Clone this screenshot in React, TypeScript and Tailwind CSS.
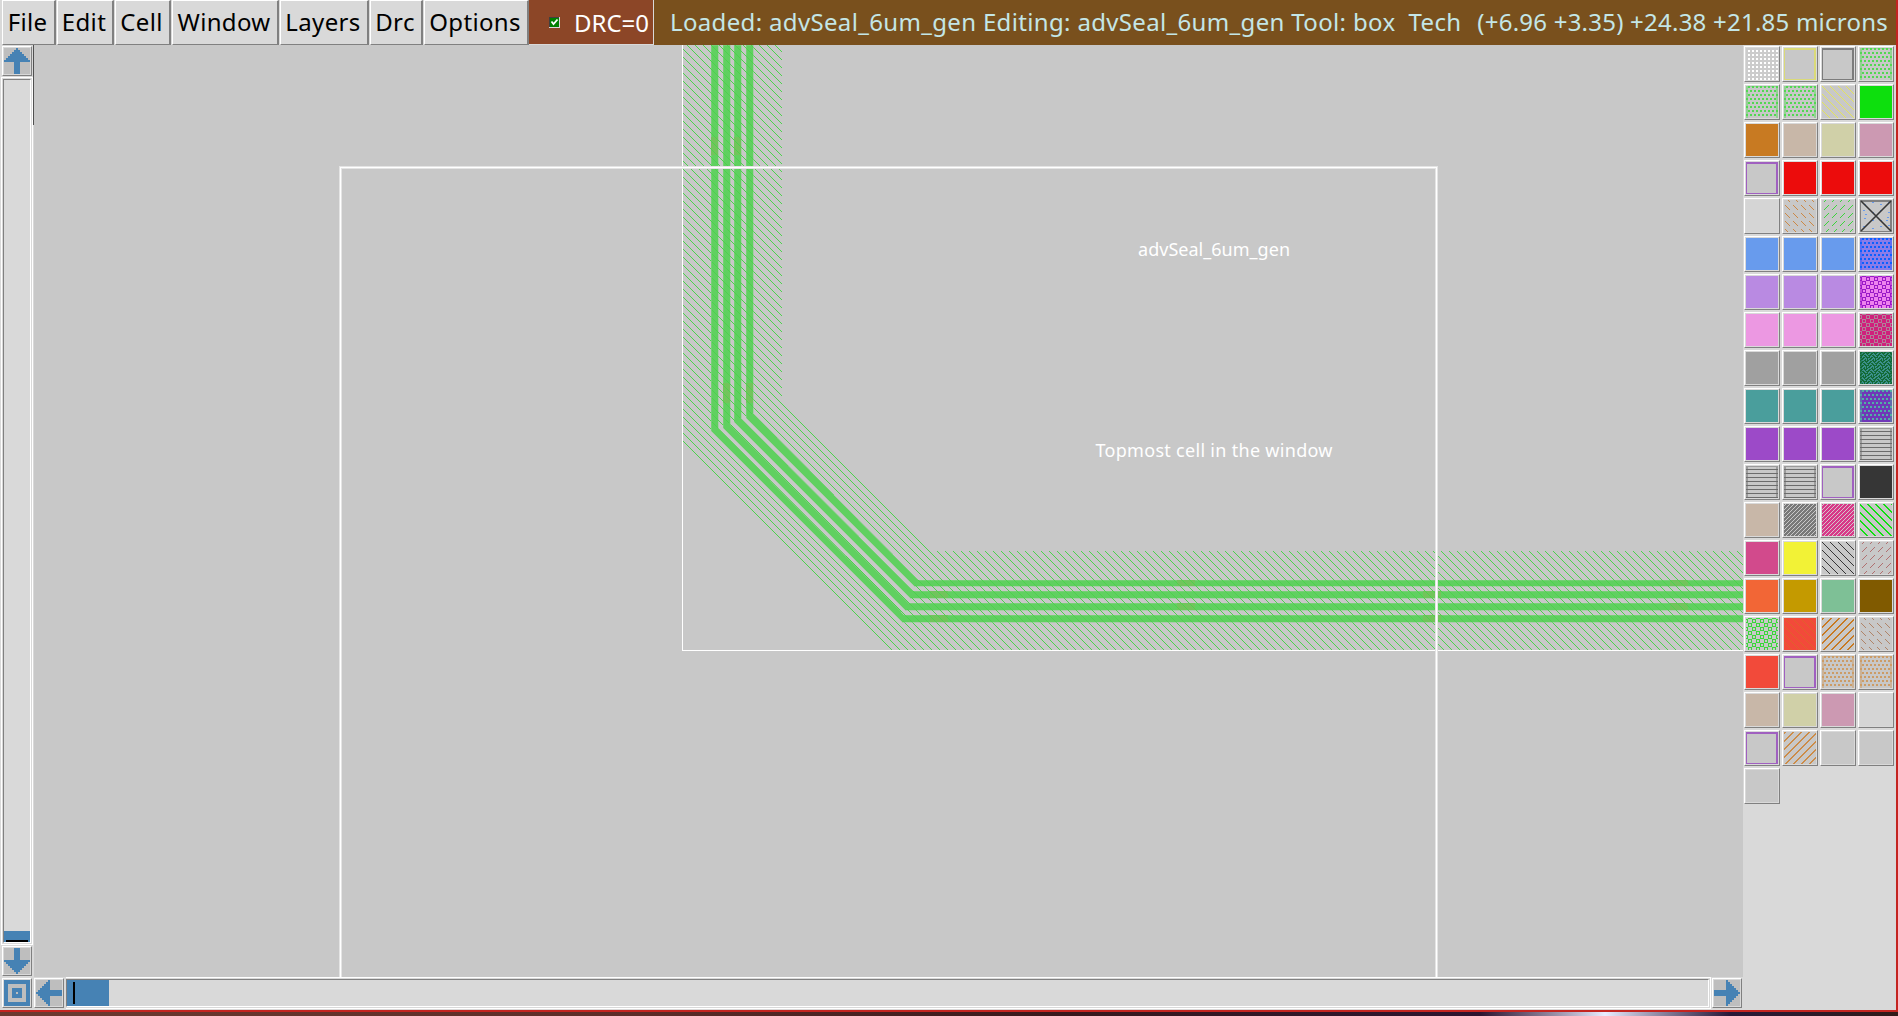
import React from "react";

type Dir = "down" | "up";

const pixels = (points: number[][]) =>
  points.map(([x, y, w = 1, h = 1]) => `M${x} ${y}h${w}v${h}h${-w}z`).join("");

function diagonal(period: number, dir: Dir, offset: number, width = 1) {
  const out: number[][] = [];
  for (let y = 0; y < 32; y++)
    for (let x = 0; x < 32; x++) {
      const k = dir === "down" ? y - x - offset : x + y - offset;
      if (((k % period) + period) % period < width) out.push([x, y]);
    }
  return pixels(out);
}

function dots(stagger: boolean) {
  const out: number[][] = [];
  for (let r = 0; r < 8; r++)
    for (let c = 0; c < 8; c++) {
      const x = stagger ? c * 4 + (r % 2 ? 0 : 2) : c * 4 + 2;
      out.push([x, stagger ? r * 4 : r * 4 + 2, 2, 2]);
    }
  return pixels(out);
}

function dashes(dir: Dir) {
  const out: number[][] = [];
  for (let y = -3; y < 32; y += 8)
    for (let x = 1; x < 32; x += 8)
      for (let i = 0; i < 5; i++) {
        const px = dir === "down" ? x + i : x + 5 - i;
        if (y + i >= 0 && y + i < 32 && px < 32) out.push([px, y + i]);
      }
  return pixels(out);
}

function rings() {
  const out: number[][] = [];
  const inRing = (x: number, y: number, ox: number, oy: number) => {
    const a = (x - ox + 32) % 8;
    const b = (y - oy + 32) % 8;
    return a < 4 && b < 4 && (a === 0 || a === 3 || b === 0 || b === 3);
  };
  for (let y = 0; y < 32; y++)
    for (let x = 0; x < 32; x++)
      if (inRing(x, y, 2, 5) || inRing(x, y, 6, 1)) out.push([x, y]);
  return pixels(out);
}

function lines() {
  return pixels([3, 7, 11, 15, 19, 23, 27, 31].map((y) => [0, y, 32, 1]));
}

function weave() {
  const rows = ["11000110", "10011011", "00110001", "11101100", "01000110", "11011011", "00110001", "01100101"];
  const out: number[][] = [];
  for (let y = 0; y < 32; y++)
    for (let x = 0; x < 32; x++) if (rows[y % 8][(x + (y >> 3)) % 8] === "1") out.push([x, y]);
  return pixels(out);
}

type Sw = { bg: string; d?: string; fg?: string; frame?: string; edge?: string; cross?: boolean };
const G = "#c8c8c8";
const solid = (bg: string): Sw => ({ bg });
const outline = (frame: string): Sw => ({ bg: G, frame });
const pat = (d: string, fg: string, bg = G, edge?: string): Sw => ({ bg, d, fg, edge });

const greenDots = pat(dots(true), "#52d852", G, "#5fd85f");
const orangeDots = pat(dots(true), "#cc9c66", G, "#cc9c66");
const hLines = pat(lines(), "#6c6c6c", G, "#6c6c6c");
const purpleBox = outline("#a060c0");

const swatches: Sw[] = [
  pat(dots(false), "#ffffff", "#cccccc"), outline("#dada78"), outline("#7c7c7c"), greenDots,
  greenDots, greenDots, pat(diagonal(8, "down", 0), "#e4e45c"), solid("#0ddf0d"),
  solid("#c87a22"), solid("#c8b7a8"), solid("#d0d0a8"), solid("#cc99b2"),
  purpleBox, solid("#ec0c0c"), solid("#ec0c0c"), solid("#ec0c0c"),
  solid("#d5d5d5"), pat(dashes("down"), "#cc8844"), pat(dashes("up"), "#3cd43c"), { bg: G, cross: true, frame: "#808080" },
  solid("#689bed"), solid("#689bed"), solid("#689bed"), pat(dots(true), "#0a60ff", "#8a7ce8", "#3060ff"),
  solid("#b98ae2"), solid("#b98ae2"), solid("#b98ae2"), pat(rings(), "#9a18c8", "#ee82ee", "#9a18c8"),
  solid("#ec98e2"), solid("#ec98e2"), solid("#ec98e2"), pat(rings(), "#b08098", "#d0207c", "#d0207c"),
  solid("#a0a0a0"), solid("#a0a0a0"), solid("#a0a0a0"), pat(weave(), "#126a36", "#3c908c", "#126a36"),
  solid("#4a9e9c"), solid("#4a9e9c"), solid("#4a9e9c"), pat(dots(true), "#50b0a4", "#7038b8", "#50a0a4"),
  solid("#9c4ac8"), solid("#9c4ac8"), solid("#9c4ac8"), hLines,
  hLines, hLines, purpleBox, solid("#363636"),
  solid("#c8b7a8"), pat(diagonal(4, "up", 1), "#c8c8c8", "#787878"), pat(diagonal(4, "up", 1), "#d4c4cc", "#d83888"), pat(diagonal(8, "down", 0, 2), "#10e010"),
  solid("#d24a8c"), solid("#f2f236"), pat(diagonal(8, "down", 0), "#363636"), pat(dashes("up"), "#b07070"),
  solid("#f26636"), solid("#c49a00"), solid("#7ec096"), solid("#805a00"),
  pat(rings(), "#38d838"), pat(diagonal(8, "down", 0), "#e0602c", "#f24a3a"), pat(diagonal(8, "up", 0, 2), "#c87a22"), pat(dashes("down"), "#b08468"),
  solid("#f24a3a"), purpleBox, orangeDots, orangeDots,
  solid("#c8b7a8"), solid("#d0d0a8"), solid("#cc99b2"), solid("#d5d5d5"),
  purpleBox, pat(diagonal(8, "up", 0, 2), "#cc8c48"), solid(G), solid(G),
  solid(G),
];

function Swatch({ s }: { s: Sw }) {
  return (
    <div className="h-9 w-9 border border-t-white border-l-white border-r-[#808080] border-b-[#808080] bg-[#d9d9d9] p-px">
      <svg width="32" height="32" viewBox="0 0 32 32" shapeRendering="crispEdges" className="block">
        <rect width="32" height="32" fill={s.bg} />
        {s.edge && <path d="M0 0h2v32h-2zM30 0h2v32h-2zM2 0h28v1h-28z" fill={s.edge} opacity=".5" />}
        {s.d && <path d={s.d} fill={s.fg} />}
        {s.frame && <path d="M0 0H32V32H0zM1 2V31H30V2z" fillRule="evenodd" fill={s.frame} />}
        {s.cross && (
          <>
            <path d="M4 4h2M12 2h2M20 4h2M28 2h2M3 10h2M12 12h2M20 10h2M28 12h2M4 18h2M12 20h2M20 20h2M27 17h2M3 26h2M12 28h2M20 26h2M28 25h2M5 14h2M26 20h2" stroke="#689bed" />
            <path d="M1 1L31 31M31 1L1 31" stroke="#363636" strokeWidth="1.6" shapeRendering="auto" />
          </>
        )}
      </svg>
    </div>
  );
}

function ArrowButton({ children, className = "" }: { children: React.ReactNode; className?: string }) {
  return (
    <div className={`h-[30px] w-[30px] shrink-0 border border-t-white border-l-white border-r-[#808080] border-b-[#808080] bg-[#d9d9d9] p-px ${className}`}>
      <svg width="26" height="26" viewBox="0 0 26 26" shapeRendering="crispEdges" className="block bg-[#bebebe]" fill="#4682b4">
        {children}
      </svg>
    </div>
  );
}

const UP = "M12 0h2v2h2v2h2v2h2v2h2v2h2v2h2v2H16V26H10V14H0V12H2V10H4V8H6V6H8V4H10V2H12z";

const menus: [string, string][] = [
  ["File", "w-[54px]"],
  ["Edit", "w-[57px]"],
  ["Cell", "w-[56px]"],
  ["Window", "w-[107px]"],
  ["Layers", "w-[89px]"],
  ["Drc", "w-[53px]"],
  ["Options", "w-[105px]"],
];

const ribbons = [
  "711,45 718,45 718,428 904,615 1743,615 1743,622 902,622 711,431",
  "723,45 730,45 730,425 908,603 1743,603 1743,610 905,610 723,428",
  "734,45 741,45 741,418 913,591 1743,591 1743,598 910,598 734,422",
  "746,45 753,45 753,413 918,580 1743,580 1743,586 914,586 746,418",
];

const contacts = [
  [711, 137, 7, 18], [734, 137, 7, 18], [723, 383, 7, 20], [746, 383, 7, 20],
  [930, 591, 18, 7], [930, 615, 18, 7], [1177, 580, 18, 6], [1177, 603, 18, 7],
  [1423, 591, 18, 7], [1423, 615, 18, 7], [1670, 580, 18, 6], [1670, 603, 18, 7],
];

function Layout() {
  return (
    <svg width="1709" height="932" viewBox="34 45 1709 932" className="block" shapeRendering="crispEdges">
      <defs>
        <pattern id="hatch" width="8" height="8" patternUnits="userSpaceOnUse">
          <path d={pixels([0, 1, 2, 3, 4, 5, 6, 7].map((i) => [i, (i + 6) % 8]))} fill="#4cd24c" />
        </pattern>
      </defs>
      <path d="M683 45H782V404L929 551H1743V650H892L683 442z" fill="url(#hatch)" />
      {ribbons.map((p) => (
        <polygon key={p} points={p} fill="#60d060" stroke="#8cce8c" strokeWidth="1" strokeOpacity=".5" />
      ))}
      {contacts.map(([x, y, w, h]) => (
        <rect key={`${x}-${y}`} x={x} y={y} width={w} height={h} fill="#72c45c" />
      ))}
      <path d="M711 45H753V413L712 430zM917 580H1743V622H903z" fill="url(#hatch)" />
      <path d="M682.5 45V650.5H1743" fill="none" stroke="#fff" />
      <path d="M340.5 977V167.5H1436.5V977" fill="none" stroke="#e4e4e4" strokeWidth="3" />
      <path d="M340.5 977V167.5H1436.5V977" fill="none" stroke="#fff" />
      <g fill="#fff" fontFamily="'Noto Sans', sans-serif" fontSize="18">
        <text x="1138" y="256" textLength="152">advSeal_6um_gen</text>
        <text x="1095.5" y="457" textLength="237">Topmost cell in the window</text>
      </g>
    </svg>
  );
}

export default function App() {
  return (
    <div className="flex h-[1016px] w-[1898px] flex-col overflow-hidden bg-[#d9d9d9] font-['Noto_Sans',sans-serif]">
      <div className="flex h-[1012px] border-r-2 border-b-2 border-[#c42420]">
        <div className="flex w-full flex-col">
          <header className="flex h-[45px] shrink-0 text-[24px] leading-[43px] whitespace-pre">
            <nav className="flex w-[529px] justify-between pl-0.5 tracking-[0.34px] text-black">
              {menus.map(([label, w]) => (
                <button key={label} className={`${w} flex justify-center border-t border-r-2 border-b border-l border-t-white border-r-[#808080] border-b-[#808080] border-l-white pr-0.5 leading-[42px]`}>
                  {label}
                </button>
              ))}
            </nav>
            <div className="flex w-[125px] items-center border-r border-b border-[#d9d9d9] bg-[#8c4627] pl-5 text-white">
              <svg width="11" height="11" viewBox="0 0 11 11" className="mr-[14px] shrink-0">
                <rect width="11" height="11" fill="#d9d9d9" />
                <rect width="10" height="10" fill="#404040" />
                <rect x="1" y="1" width="9" height="9" fill="#008000" />
                <path d="M2.5 4.5L4.5 7L8.5 2.5" fill="none" stroke="#fff" strokeWidth="1.8" />
              </svg>
              <span>DRC=0</span>
            </div>
            <div className="flex flex-1 justify-between bg-[#79501d] pr-2 pl-4 text-[#c4e6e6]">
              <span className="tracking-[0.34px]">Loaded: advSeal_6um_gen Editing: advSeal_6um_gen Tool: box  Tech</span>
              <span className="tracking-[0.23px]">(+6.96 +3.35) +24.38 +21.85 microns</span>
            </div>
          </header>

          <div className="flex flex-1">
            <div className="flex w-[1743px] flex-col">
              <div className="flex h-[932px]">
                <div className="flex w-[34px] flex-col pl-0.5">
                  <ArrowButton className="mt-px"><path d={UP} /></ArrowButton>
                  <div className="mt-px -ml-px h-[868px] w-8 border border-white p-px">
                    <div className="flex h-full w-full flex-col justify-end border border-t-[#808080] border-r-white border-b-white border-l-[#808080]">
                      <div className="flex h-[11px] items-end bg-[#4682b4] px-0.5">
                        <div className="h-0.5 w-full bg-black" />
                      </div>
                    </div>
                  </div>
                  <ArrowButton className="mt-px"><path d={UP} transform="rotate(180 13 13)" /></ArrowButton>
                </div>
                <div className="relative w-[1709px] bg-[#c8c8c8]">
                  <Layout />
                  <div className="absolute top-0 -left-px h-20 w-px bg-[#505050]" />
                </div>
              </div>
              <div className="flex h-[33px] items-start pl-0.5">
                <ArrowButton className="mt-px">
                  <path d="M0 0H26V26H0zM4 4V22H22V4zM8 8H18V18H8zM12 12V14H14V12z" fillRule="evenodd" />
                </ArrowButton>
                <ArrowButton className="mt-px ml-0.5"><path d={UP} transform="rotate(-90 13 13)" /></ArrowButton>
                <div className="ml-0.5 h-8 w-[1645px] border-y border-r border-white py-px pr-px">
                  <div className="flex h-full w-full border border-t-[#808080] border-r-white border-b-white border-l-[#808080]">
                    <div className="w-[42px] bg-[#4682b4] py-0.5 pl-1.5">
                      <div className="h-full w-0.5 bg-black" />
                    </div>
                  </div>
                </div>
                <ArrowButton className="mt-px ml-px"><path d={UP} transform="rotate(90 13 13)" /></ArrowButton>
              </div>
            </div>
            <aside className="grid flex-1 auto-rows-[38px] grid-cols-[repeat(4,38px)] content-start pt-px pl-px">
              {swatches.map((s, i) => (
                <Swatch key={i} s={s} />
              ))}
            </aside>
          </div>
        </div>
      </div>
      <div className="flex h-1 bg-[#30181c]">
        <div className="w-[640px] bg-linear-to-r from-[#6c3a30] to-[#5c2c28]" />
        <div className="w-[840px] bg-linear-to-r from-[#5c2c28] via-[#38181c] to-[#2c1430]" />
        <div className="w-[250px] bg-linear-to-r from-[#2c1430] via-[#e8ecff] to-[#281838]" />
        <div className="flex-1 bg-linear-to-r from-[#281838] to-[#301a18]" />
      </div>
    </div>
  );
}
